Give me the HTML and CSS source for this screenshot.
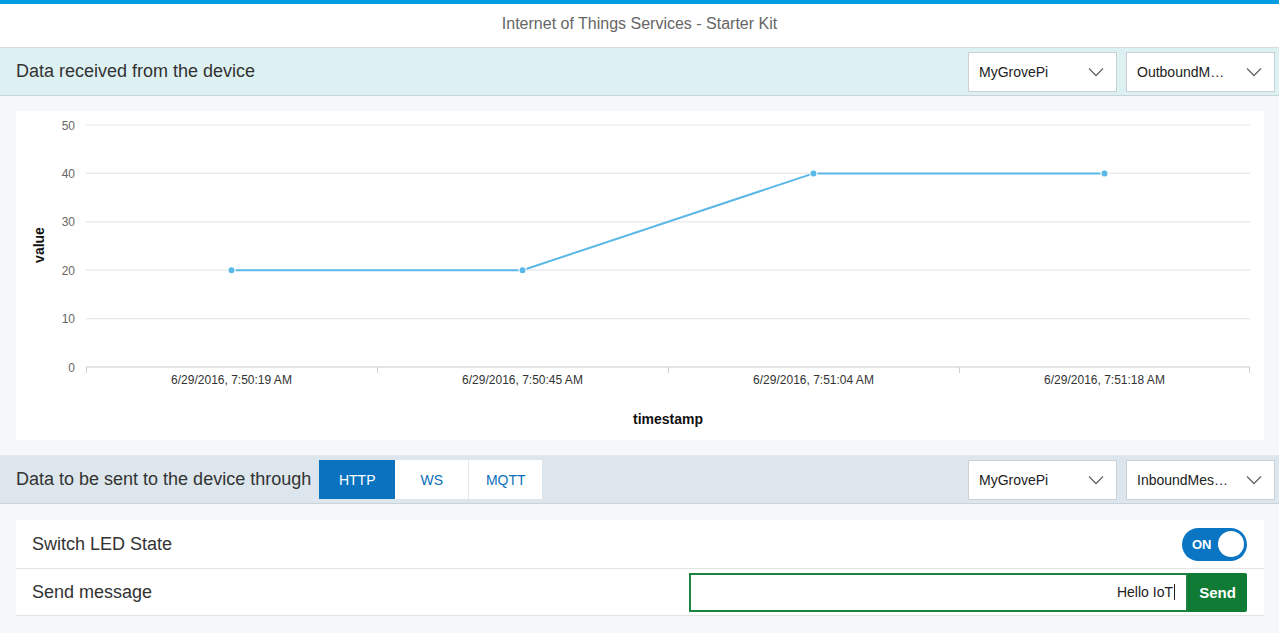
FILE: index.html
```html
<!DOCTYPE html>
<html>
<head>
<meta charset="utf-8">
<link rel="stylesheet" href="styles.css">
</head>
<body>
<div class="topbar"></div>
<header class="header">Internet of Things Services - Starter Kit</header>

<section class="bar bar-cyan">
  <div class="bar-title">Data received from the device</div>
  <div class="selects">
    <div class="select"><span>MyGrovePi</span><svg class="chev" width="16" height="10" viewBox="0 0 16 10"><path d="M1 1.5 L8 8.5 L15 1.5" fill="none" stroke="#666" stroke-width="1.3"/></svg></div>
    <div class="select"><span>OutboundM…</span><svg class="chev" width="16" height="10" viewBox="0 0 16 10"><path d="M1 1.5 L8 8.5 L15 1.5" fill="none" stroke="#666" stroke-width="1.3"/></svg></div>
  </div>
</section>

<div class="body body-chart">
  <div class="card chart-card">
    <svg class="chart" width="1248" height="329" viewBox="0 0 1248 329">
      <g stroke="#e8e8e8" stroke-width="1.2">
        <line x1="70" y1="14" x2="1234" y2="14"/>
        <line x1="70" y1="62.4" x2="1234" y2="62.4"/>
        <line x1="70" y1="110.8" x2="1234" y2="110.8"/>
        <line x1="70" y1="159.2" x2="1234" y2="159.2"/>
        <line x1="70" y1="207.6" x2="1234" y2="207.6"/>
      </g>
      <g stroke="#dcdcdc" stroke-width="1.5">
        <line x1="70" y1="256" x2="1234" y2="256"/>
      </g>
      <g stroke="#d0d0d0" stroke-width="1">
        <line x1="70.5" y1="256" x2="70.5" y2="262"/>
        <line x1="361.5" y1="256" x2="361.5" y2="262"/>
        <line x1="652.5" y1="256" x2="652.5" y2="262"/>
        <line x1="943.5" y1="256" x2="943.5" y2="262"/>
        <line x1="1233.5" y1="256" x2="1233.5" y2="262"/>
      </g>
      <g class="ylab" text-anchor="end">
        <text x="59" y="18.5">50</text>
        <text x="59" y="66.9">40</text>
        <text x="59" y="115.3">30</text>
        <text x="59" y="163.7">20</text>
        <text x="59" y="212.1">10</text>
        <text x="59" y="260.5">0</text>
      </g>
      <g class="xlab" text-anchor="middle">
        <text x="215.5" y="273">6/29/2016, 7:50:19 AM</text>
        <text x="506.5" y="273">6/29/2016, 7:50:45 AM</text>
        <text x="797.5" y="273">6/29/2016, 7:51:04 AM</text>
        <text x="1088.5" y="273">6/29/2016, 7:51:18 AM</text>
      </g>
      <text class="axis-title" x="652" y="313" text-anchor="middle">timestamp</text>
      <text class="axis-title" x="0" y="0" text-anchor="middle" transform="translate(28 134) rotate(-90)">value</text>
      <polyline points="215.5,159.2 506.5,159.2 797.5,62.4 1088.5,62.4" fill="none" stroke="#5ab8e8" stroke-width="2"/>
      <g fill="#5ab8e8" stroke="#fff" stroke-width="1.2">
        <circle cx="215.5" cy="159.2" r="3.6"/>
        <circle cx="506.5" cy="159.2" r="3.6"/>
        <circle cx="797.5" cy="62.4" r="3.6"/>
        <circle cx="1088.5" cy="62.4" r="3.6"/>
      </g>
    </svg>
  </div>
</div>

<section class="bar bar-gray">
  <div class="bar-left">
    <div class="bar-title">Data to be sent to the device through</div>
    <div class="tabs">
      <div class="tab active">HTTP</div>
      <div class="tab">WS</div>
      <div class="tab">MQTT</div>
    </div>
  </div>
  <div class="selects">
    <div class="select"><span>MyGrovePi</span><svg class="chev" width="16" height="10" viewBox="0 0 16 10"><path d="M1 1.5 L8 8.5 L15 1.5" fill="none" stroke="#666" stroke-width="1.3"/></svg></div>
    <div class="select"><span>InboundMes…</span><svg class="chev" width="16" height="10" viewBox="0 0 16 10"><path d="M1 1.5 L8 8.5 L15 1.5" fill="none" stroke="#666" stroke-width="1.3"/></svg></div>
  </div>
</section>

<div class="body body-list">
  <div class="card list-card">
    <div class="row">
      <div class="row-label">Switch LED State</div>
      <div class="toggle"><span class="toggle-text">ON</span><span class="knob"></span></div>
    </div>
    <div class="row row2">
      <div class="row-label">Send message</div>
      <div class="sender">
        <div class="input">Hello IoT<span class="caret"></span></div>
        <div class="send-btn">Send</div>
      </div>
    </div>
  </div>
</div>
</body>
</html>
```

FILE: styles.css
```css
* { box-sizing: border-box; }
html, body { margin: 0; padding: 0; }
body {
  width: 1279px;
  height: 633px;
  overflow: hidden;
  font-family: "Liberation Sans", Arial, sans-serif;
  color: #333;
  background: #f5f8fa;
}
.topbar { height: 4px; background: #009de0; }
.header {
  height: 44px;
  background: #fff;
  border-bottom: 1px solid #d6dde1;
  display: flex;
  align-items: center;
  justify-content: center;
  font-size: 16px;
  color: #666;
  padding-bottom: 3px;
}
.bar {
  height: 48px;
  display: flex;
  align-items: center;
  justify-content: space-between;
  padding: 0 4px 0 16px;
  border-bottom: 1px solid #c9d4da;
}
.bar-cyan { background: #ddf0f2; }
.bar-gray { background: #dce6ec; border-top: 1px solid #e2e8ec; height: 49px; }
.bar-title { font-size: 18px; color: #333; }
.bar-left { display: flex; align-items: center; gap: 8px; }
.selects { display: flex; gap: 9px; }
.select {
  width: 149px;
  height: 40px;
  background: #fff;
  border: 1px solid #c9d1d6;
  display: flex;
  align-items: center;
  justify-content: space-between;
  padding: 0 12px 0 10px;
  font-size: 14px;
  color: #222;
}
.chev { display: block; }
.tabs { display: flex; height: 39px; }
.tab {
  height: 39px;
  width: 74px;
  background: #fff;
  border-right: 1px solid #e2e7ea;
  display: flex;
  align-items: center;
  justify-content: center;
  font-size: 14px;
  color: #0a6fb8;
}
.tab.active { width: 76px; background: #0a72bf; color: #fff; border-right: none; }
.tab:last-child { width: 73px; border-right: none; }
.body-chart { height: 359px; padding: 15px 15px 0 16px; }
.card { background: #fff; }
.chart-card { height: 329px; }
.chart { display: block; font-family: "Liberation Sans", Arial, sans-serif; }
.ylab text { font-size: 12px; fill: #666; }
.xlab text { font-size: 12px; fill: #333; }
.axis-title { font-size: 14px; font-weight: bold; fill: #111; }
.body-list { padding: 16px 15px 0 16px; }
.row {
  height: 49px;
  display: flex;
  align-items: center;
  justify-content: space-between;
  padding: 0 17px 0 16px;
  border-bottom: 1px solid #e3e3e3;
}
.row2 { height: 47px; }
.row-label { font-size: 18px; color: #333; }
.toggle {
  width: 65px;
  height: 33px;
  border-radius: 17px;
  background: #0a75c2;
  display: flex;
  align-items: center;
  justify-content: space-between;
  padding: 0 3px 0 10px;
}
.toggle-text { color: #fff; font-size: 13px; font-weight: bold; }
.knob { width: 26px; height: 26px; border-radius: 50%; background: #fff; }
.sender { display: flex; height: 39px; }
.input {
  width: 499px;
  height: 39px;
  border: 2px solid #1a8440;
  display: flex;
  align-items: center;
  justify-content: flex-end;
  padding-right: 11px;
  font-size: 14px;
  color: #222;
}
.caret { display: inline-block; width: 1px; height: 16px; background: #222; margin-left: 1px; }
.send-btn {
  width: 59px;
  height: 39px;
  background: #0f7b34;
  color: #fff;
  font-size: 15px;
  font-weight: bold;
  display: flex;
  align-items: center;
  justify-content: center;
  border-radius: 0 2px 2px 0;
}
```
